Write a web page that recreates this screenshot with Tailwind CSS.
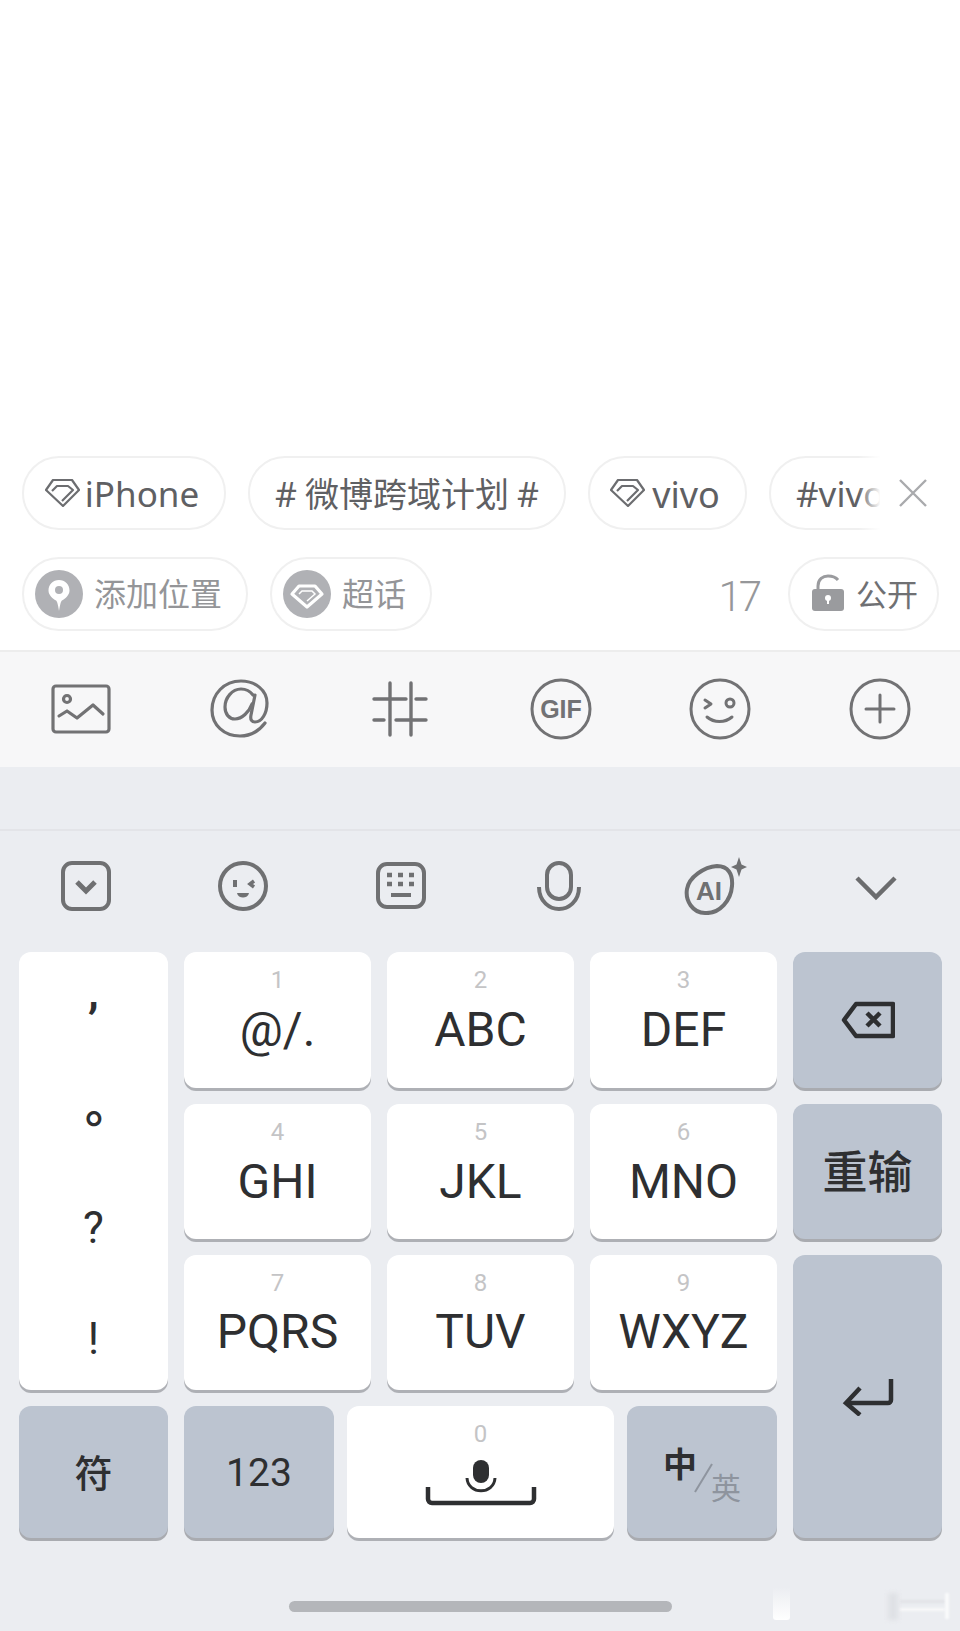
<!DOCTYPE html>
<html lang="zh">
<head>
  <meta charset="UTF-8" />
  <meta name="viewport" content="width=device-width, initial-scale=1.0" />
  <title>微博输入</title>
  <script src="https://cdn.jsdelivr.net/npm/@tailwindcss/browser@4"></script>
</head>
<body class="w-[960px] h-[1631px] overflow-hidden bg-white font-['Noto_Sans','Noto_Sans_CJK_SC',sans-serif] relative">

  <!-- compose area -->
  <div class="h-[456px]"></div>

  <!-- topic chips -->
  <div class="relative h-[74px] pl-[22px] flex gap-[22px] overflow-hidden text-[#5f6063] text-[35px]">
    <div class="h-[74px] w-[204px] shrink-0 rounded-full border-2 border-[#f0f0f0] flex items-center justify-center gap-[5px] pr-[4px]">
      <svg class="w-[35px] h-[28px]" viewBox="0 0 35 28" fill="none" stroke="#6c6d70" stroke-width="2.200" stroke-linejoin="round"><path d="M8 1h19l7 10-16 16L1 11z"/><path d="M7 12l5-5h11l5 4-11 11"/></svg>
      <span class="pt-[3px]">iPhone</span>
    </div>
    <div class="h-[74px] w-[318px] shrink-0 rounded-full border-2 border-[#f0f0f0] flex items-center justify-center text-[34px] gap-[8px]">
      <span class="pt-[3px]">#</span><span class="pt-[3px]">微博跨域计划</span><span class="pt-[3px]">#</span>
    </div>
    <div class="h-[74px] w-[159px] shrink-0 rounded-full border-2 border-[#f0f0f0] flex items-center justify-center gap-[7px] pr-[5px]">
      <svg class="w-[35px] h-[28px]" viewBox="0 0 35 28" fill="none" stroke="#6c6d70" stroke-width="2.200" stroke-linejoin="round"><path d="M8 1h19l7 10-16 16L1 11z"/><path d="M7 12l5-5h11l5 4-11 11"/></svg>
      <span class="pt-[3px] text-[36px]">vivo</span>
    </div>
    <div class="h-[74px] w-[160px] shrink-0 rounded-full border-2 border-[#f0f0f0] pl-[25px] pt-[3px] flex items-center">#vivo</div>
    <div class="absolute left-[858px] top-0 w-[102px] h-[74px] bg-gradient-to-r from-white/0 to-white to-[22%]"></div>
    <svg class="absolute left-[899px] top-[23px] w-[28px] h-[28px]" viewBox="0 0 28 28" fill="none" stroke="#a9aaad" stroke-width="2.400"><path d="M1 1l26 26M27 1L1 27"/></svg>
  </div>

  <!-- location row -->
  <div class="mt-[27px] h-[74px] pl-[22px] pr-[21px] flex items-center text-[#949598] text-[32px]">
    <div class="h-[74px] w-[226px] rounded-full border-2 border-[#f0f0f0] flex items-center pl-[11px] gap-[11px]">
      <svg class="w-[48px] h-[48px]" viewBox="0 0 48 48"><circle cx="24" cy="24" r="24" fill="#b0b1b5"/><path d="M24 10c-6 0-10.500 4.500-10.500 10.500 0 4.500 4 8 7.500 10 1 .5 2 4 3 10.500 1-6.500 2-10 3-10.500 3.500-2 7.500-5.500 7.500-10C34.500 14.500 30 10 24 10z" fill="#fff"/><circle cx="24" cy="20" r="4" fill="#b0b1b5"/></svg>
      <span>添加位置</span>
    </div>
    <div class="ml-[22px] h-[74px] w-[162px] rounded-full border-2 border-[#f0f0f0] flex items-center pl-[11px] gap-[11px]">
      <svg class="w-[48px] h-[48px]" viewBox="0 0 48 48"><circle cx="24" cy="24" r="24" fill="#b0b1b5"/><path d="M16 16h16l7 8-15 13L9 24z" fill="none" stroke="#fff" stroke-width="3.200" stroke-linejoin="round"/><path d="M16 24l3-3h10l3 3-8 7" fill="none" stroke="#fff" stroke-width="1.500"/></svg>
      <span>超话</span>
    </div>
    <span class="ml-auto pt-[5px] text-[42px] font-light tracking-[-3px] font-['Roboto'] text-[#96979a]">17</span>
    <div class="ml-[29px] h-[74px] w-[151px] rounded-full border-2 border-[#f0f0f0] flex items-center pl-[22px] gap-[12px] text-[31px] text-[#6f7073]">
      <svg class="mb-[3px] w-[32px] h-[37px]" viewBox="0 0 32 37"><path d="M6 15v-3C6 5 11 2 16 2c4 0 8 1.500 10 4" fill="none" stroke="#9a9b9e" stroke-width="3"/><rect x="0" y="15" width="32" height="22" rx="3" fill="#9a9b9e"/><circle cx="16" cy="24" r="3" fill="#fff"/><rect x="15" y="24" width="2" height="6" fill="#fff"/></svg>
      <span>公开</span>
    </div>
  </div>

  <!-- compose toolbar -->
  <div class="mt-[19px] h-[117px] border-t-2 border-[#ededed] bg-[#f7f7f8] grid grid-cols-6 pl-[2px] pb-[1px]">
    <div class="flex items-center justify-center pr-[2px]">
      <svg class="w-[60px] h-[50px]" viewBox="0 0 60 50" fill="none" stroke="#727274" stroke-width="3.200" stroke-linecap="round" stroke-linejoin="round"><rect x="2" y="2" width="56" height="46" rx="3"/><circle cx="16" cy="15" r="3.500"/><path d="M8 32l8-5 10 7 16-13 10 9"/></svg>
    </div>
    <div class="flex items-center justify-center pr-[2px]">
      <svg class="w-[60px] h-[60px]" viewBox="0 0 60 60" fill="none" stroke="#727274" stroke-width="3.200" stroke-linecap="round"><path d="M55 44c-6 8-15 13-25 13C14 57 2 46 2 31 2 15 14 2 31 2c14 0 26 9 26 22 0 10-5 19-12 19-3 0-5-2-4-7l4-20"/><path d="M43 16c-3-4-7-6-12-6-9 0-16 9-16 18 0 7 4 12 10 12 7 0 14-7 17-15"/></svg>
    </div>
    <div class="flex items-center justify-center pr-[2px]">
      <svg class="w-[56px] h-[56px]" viewBox="0 0 56 56" fill="none" stroke="#727274" stroke-width="3.400" stroke-linecap="round"><path d="M18 2v52M39 2v52M2 18h32M44 18h10M2 39h10M24 39h30"/></svg>
    </div>
    <div class="flex items-center justify-center">
      <svg class="w-[62px] h-[62px]" viewBox="0 0 62 62" fill="none"><circle cx="31" cy="31" r="29" stroke="#727274" stroke-width="3"/><text x="31" y="40" text-anchor="middle" font-family="Liberation Sans" font-weight="700" font-size="25" fill="#727274">GIF</text></svg>
    </div>
    <div class="flex items-center justify-center">
      <svg class="w-[62px] h-[62px]" viewBox="0 0 62 62" fill="none" stroke="#727274" stroke-width="3" stroke-linecap="round" stroke-linejoin="round"><circle cx="31" cy="31" r="29"/><path d="M16 22l6 4-6 4" /><circle cx="41" cy="25" r="4"/><path d="M18 39c7 6 18 6 25 0"/></svg>
    </div>
    <div class="flex items-center justify-center">
      <svg class="w-[62px] h-[62px]" viewBox="0 0 62 62" fill="none" stroke="#727274" stroke-width="3" stroke-linecap="round"><circle cx="31" cy="31" r="29"/><path d="M17 31h28M31 17v27"/></svg>
    </div>
  </div>

  <!-- keyboard -->
  <div class="bg-[#ebedf1] h-[864px] relative font-['Roboto','Noto_Sans_CJK_SC',sans-serif]">
    <div class="h-[64px] border-b-2 border-[#e3e4e8]"></div>

    <!-- ime toolbar -->
    <div class="h-[121px] grid grid-cols-6 px-[7px] pb-[12px]">
      <div class="flex items-center justify-center">
        <svg class="w-[50px] h-[50px]" viewBox="0 0 50 50" fill="none" stroke="#6f7072" stroke-width="4"><rect x="2" y="2" width="46" height="46" rx="9"/><path d="M16 21l9 9 9-9" stroke-width="5"/></svg>
      </div>
      <div class="flex items-center justify-center">
        <svg class="w-[50px] h-[50px]" viewBox="0 0 50 50" fill="none" stroke="#6f7072" stroke-width="4"><circle cx="25" cy="25" r="23"/><path d="M17 19v7"/><path d="M36 20l-4 3 4 3" stroke-width="3.500"/><path d="M19 32h12c-1 6-11 6-12 0z" fill="#6f7072" stroke="none"/></svg>
      </div>
      <div class="flex items-center justify-center">
        <svg class="w-[50px] h-[47px]" viewBox="0 0 50 47" fill="none" stroke="#6f7072" stroke-width="4"><rect x="2" y="2" width="46" height="43" rx="9"/><path d="M11 13h5M22 13h5M33 13h5M11 22h5M22 22h5M33 22h5" stroke-width="4.500"/><path d="M15 33h20" stroke-width="4"/></svg>
      </div>
      <div class="flex items-center justify-center">
        <svg class="w-[44px] h-[50px]" viewBox="0 0 44 50" fill="none" stroke="#6f7072" stroke-width="4"><rect x="10" y="2" width="24" height="36" rx="12"/><path d="M2 26c0 15 11 22 20 22s20-7 20-22"/></svg>
      </div>
      <div class="flex items-center justify-center">
        <svg class="w-[64px] h-[58px]" viewBox="0 0 64 58" fill="none"><path d="M3 32C5 20 20 10 33 9c11 0 16 8 15 20-1 14-12 28-27 27C9 56 1 44 3 32z" stroke="#6f7072" stroke-width="4"/><text x="25" y="43" text-anchor="middle" font-family="Liberation Sans" font-weight="700" font-size="26" fill="#6f7072">AI</text><path d="M55 0l2.500 7.500L63 10l-5.500 2.500L55 20l-2.500-7.500L47 10l5.500-2.500z" fill="#6f7072"/></svg>
      </div>
      <div class="flex items-center justify-center pl-[3px] pt-[5px]">
        <svg class="w-[42px] h-[26px]" viewBox="0 0 42 26" fill="none" stroke="#6b6c6e" stroke-width="4.500"><path d="M2 3l19 19L40 3"/></svg>
      </div>
    </div>

    <!-- keys -->
    <div class="px-[19px] grid grid-cols-[149px_187px_187px_187px_149px] grid-rows-[136px_135px_135px_132px] gap-x-[16px] gap-y-[16px] text-[#2e2f31]">
      <div class="row-span-3 bg-white rounded-[12px] shadow-[0_3px_0_#aeb0b5] relative text-center text-[44px]">
        <span class="absolute inset-x-0 top-[18px] leading-none font-bold">,</span>
        <span class="absolute left-[66px] top-[127px] text-[46px] leading-none font-bold font-['Noto_Sans_CJK_SC']">。</span>
        <span class="absolute inset-x-0 top-[254px] leading-none">?</span>
        <span class="absolute inset-x-0 top-[365px] leading-none">!</span>
      </div>
      <div class="bg-white rounded-[12px] shadow-[0_3px_0_#aeb0b5] flex flex-col items-center"><span class="mt-[14px] text-[24px] leading-[28px] text-[#c4c4c6]">1</span><span class="mt-[6px] text-[48px] leading-[60px]">@/.</span></div>
      <div class="bg-white rounded-[12px] shadow-[0_3px_0_#aeb0b5] flex flex-col items-center"><span class="mt-[14px] text-[24px] leading-[28px] text-[#c4c4c6]">2</span><span class="mt-[6px] text-[48px] leading-[60px]">ABC</span></div>
      <div class="bg-white rounded-[12px] shadow-[0_3px_0_#aeb0b5] flex flex-col items-center"><span class="mt-[14px] text-[24px] leading-[28px] text-[#c4c4c6]">3</span><span class="mt-[6px] text-[48px] leading-[60px]">DEF</span></div>
      <div class="bg-[#bcc4d0] rounded-[12px] shadow-[0_3px_0_#a9abb0] flex items-center justify-center">
        <svg class="w-[54px] h-[38px]" viewBox="0 0 54 38" fill="none" stroke="#2e2f31" stroke-width="4.500" stroke-linejoin="round"><path d="M15 3h37v32H15L3 19z"/><path d="M26 12l13 13M39 12L26 25"/></svg>
      </div>

      <div class="bg-white rounded-[12px] shadow-[0_3px_0_#aeb0b5] flex flex-col items-center"><span class="mt-[14px] text-[24px] leading-[28px] text-[#c4c4c6]">4</span><span class="mt-[6px] text-[48px] leading-[60px]">GHI</span></div>
      <div class="bg-white rounded-[12px] shadow-[0_3px_0_#aeb0b5] flex flex-col items-center"><span class="mt-[14px] text-[24px] leading-[28px] text-[#c4c4c6]">5</span><span class="mt-[6px] text-[48px] leading-[60px]">JKL</span></div>
      <div class="bg-white rounded-[12px] shadow-[0_3px_0_#aeb0b5] flex flex-col items-center"><span class="mt-[14px] text-[24px] leading-[28px] text-[#c4c4c6]">6</span><span class="mt-[6px] text-[48px] leading-[60px]">MNO</span></div>
      <div class="bg-[#bcc4d0] rounded-[12px] shadow-[0_3px_0_#a9abb0] flex items-center justify-center pb-[4px] text-[45px] font-['Noto_Sans_CJK_SC'] font-medium">重输</div>

      <div class="bg-white rounded-[12px] shadow-[0_3px_0_#aeb0b5] flex flex-col items-center"><span class="mt-[14px] text-[24px] leading-[28px] text-[#c4c4c6]">7</span><span class="mt-[5px] text-[48px] leading-[60px]">PQRS</span></div>
      <div class="bg-white rounded-[12px] shadow-[0_3px_0_#aeb0b5] flex flex-col items-center"><span class="mt-[14px] text-[24px] leading-[28px] text-[#c4c4c6]">8</span><span class="mt-[5px] text-[48px] leading-[60px]">TUV</span></div>
      <div class="bg-white rounded-[12px] shadow-[0_3px_0_#aeb0b5] flex flex-col items-center"><span class="mt-[14px] text-[24px] leading-[28px] text-[#c4c4c6]">9</span><span class="mt-[5px] text-[48px] leading-[60px]">WXYZ</span></div>
      <div class="row-span-2 bg-[#bcc4d0] rounded-[12px] shadow-[0_3px_0_#a9abb0] flex items-center justify-center">
        <svg class="w-[52px] h-[38px]" viewBox="0 0 52 38" fill="none" stroke="#2e2f31" stroke-width="4.500"><path d="M49 1v21a3 3 0 0 1-3 3H4"/><path d="M18 10L4 25l14 12"/></svg>
      </div>

      <div class="bg-[#bcc4d0] rounded-[12px] shadow-[0_3px_0_#a9abb0] flex items-center justify-center pb-[4px] text-[38px] font-['Noto_Sans_CJK_SC'] font-medium">符</div>
      <div class="col-span-3 flex gap-[13px]">
        <div class="w-[150px] bg-[#bcc4d0] rounded-[12px] shadow-[0_3px_0_#a9abb0] flex items-center justify-center pt-[3px] text-[39px]">123</div>
        <div class="w-[267px] bg-white rounded-[12px] shadow-[0_3px_0_#aeb0b5] flex flex-col items-center">
          <span class="mt-[14px] text-[24px] leading-[28px] text-[#c4c4c6]">0</span>
          <svg class="mt-[12px] w-[112px] h-[46px]" viewBox="0 0 112 46" fill="none" stroke="#2e2f31"><rect x="48" y="0" width="16" height="23" rx="8" fill="#2e2f31" stroke="none"/><path d="M42 18c1 17 27 17 28 0" stroke-width="3"/><path d="M3 27v12a4 4 0 0 0 4 4h98a4 4 0 0 0 4-4V27" stroke-width="4.500"/></svg>
        </div>
        <div class="w-[150px] bg-[#bcc4d0] rounded-[12px] shadow-[0_3px_0_#a9abb0] relative font-['Noto_Sans_CJK_SC']">
          <span class="absolute left-[36px] top-[40px] text-[34px] leading-none font-bold">中</span>
          <svg class="absolute left-[66px] top-[57px] w-[20px] h-[30px]" viewBox="0 0 20 30" fill="none" stroke="#8e949e" stroke-width="2"><path d="M19 1L2 29"/></svg>
          <span class="absolute left-[84px] top-[65px] text-[30px] leading-none text-[#8e949e]">英</span>
        </div>
      </div>
    </div>

    <!-- home bar + blurred watermark -->
    <div class="absolute left-[289px] top-[834px] w-[383px] h-[11px] rounded-full bg-[#b4b6ba]"></div>
    <div class="absolute left-[773px] top-[820px] w-[17px] h-[33px] bg-gradient-to-b from-[#ebedf1] to-white rounded-[3px]"></div>
    <div class="absolute left-[888px] top-[826px] w-[10px] h-[27px] bg-[#dfe1e5] blur-[2px]"></div>
    <div class="absolute left-[900px] top-[833px] w-[45px] h-[3px] bg-[#e2e3e7] blur-[1px]"></div>
    <div class="absolute left-[900px] top-[841px] w-[45px] h-[3px] bg-[#f8f8f9] blur-[1px]"></div>
    <div class="absolute left-[945px] top-[826px] w-[4px] h-[26px] bg-white/70 blur-[1px]"></div>
  </div>
</body>
</html>
